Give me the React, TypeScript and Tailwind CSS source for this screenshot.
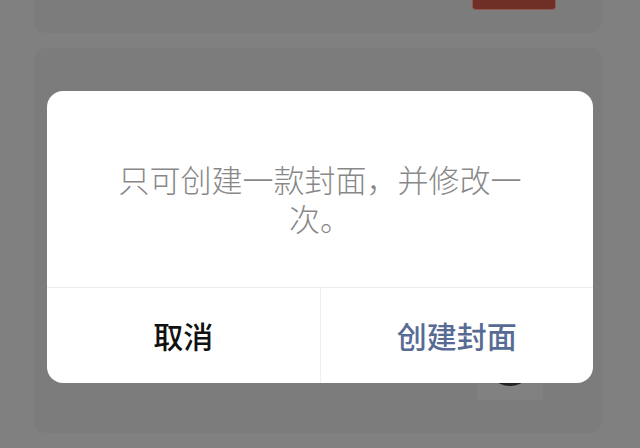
export default function App() {
  return (
    <div
      className="relative w-[640px] h-[448px] overflow-hidden bg-[#808080]"
      style={{ fontFamily: '"Noto Sans CJK SC", "Noto Sans", sans-serif' }}
    >
      {/* page behind the mask */}
      <div className="flex flex-col pl-[34px] pr-[38px] gap-[15px]">
        <div className="h-[33px] rounded-b-[12px] bg-[#7c7c7c] flex justify-end pr-[46px]">
          <div className="w-[84px] h-[10px] rounded-b-[4px] bg-[#6f2f26] border border-t-0 border-[#8c5a50]" />
        </div>
        <div className="h-[385px] rounded-[12px] bg-[#7c7c7c] flex justify-end items-end pr-[59px] pb-[33px]">
          <div className="w-[66px] h-[70px] bg-[#818181] flex justify-center items-end pb-[14px]">
            <div className="w-[50px] h-[50px] rounded-full bg-[#222]" />
          </div>
        </div>
      </div>

      {/* dialog */}
      <div className="absolute left-[47px] top-[91px] w-[546px] rounded-[16px] bg-white overflow-hidden">
        <div className="px-[66px] pt-[68px] pb-[50px] text-center text-[31px] leading-[39px] font-light text-[#888888]">
          只可创建一款封面，并修改一次。
        </div>
        <div className="flex h-[96px] border-t border-[#ececec]">
          <button className="flex-1 flex items-center justify-center text-[30px] font-medium text-[#111]">
            取消
          </button>
          <div className="w-px bg-[#efefef]" />
          <button className="flex-1 flex items-center justify-center text-[30px] font-medium text-[#576b95]">
            创建封面
          </button>
        </div>
      </div>
    </div>
  );
}
